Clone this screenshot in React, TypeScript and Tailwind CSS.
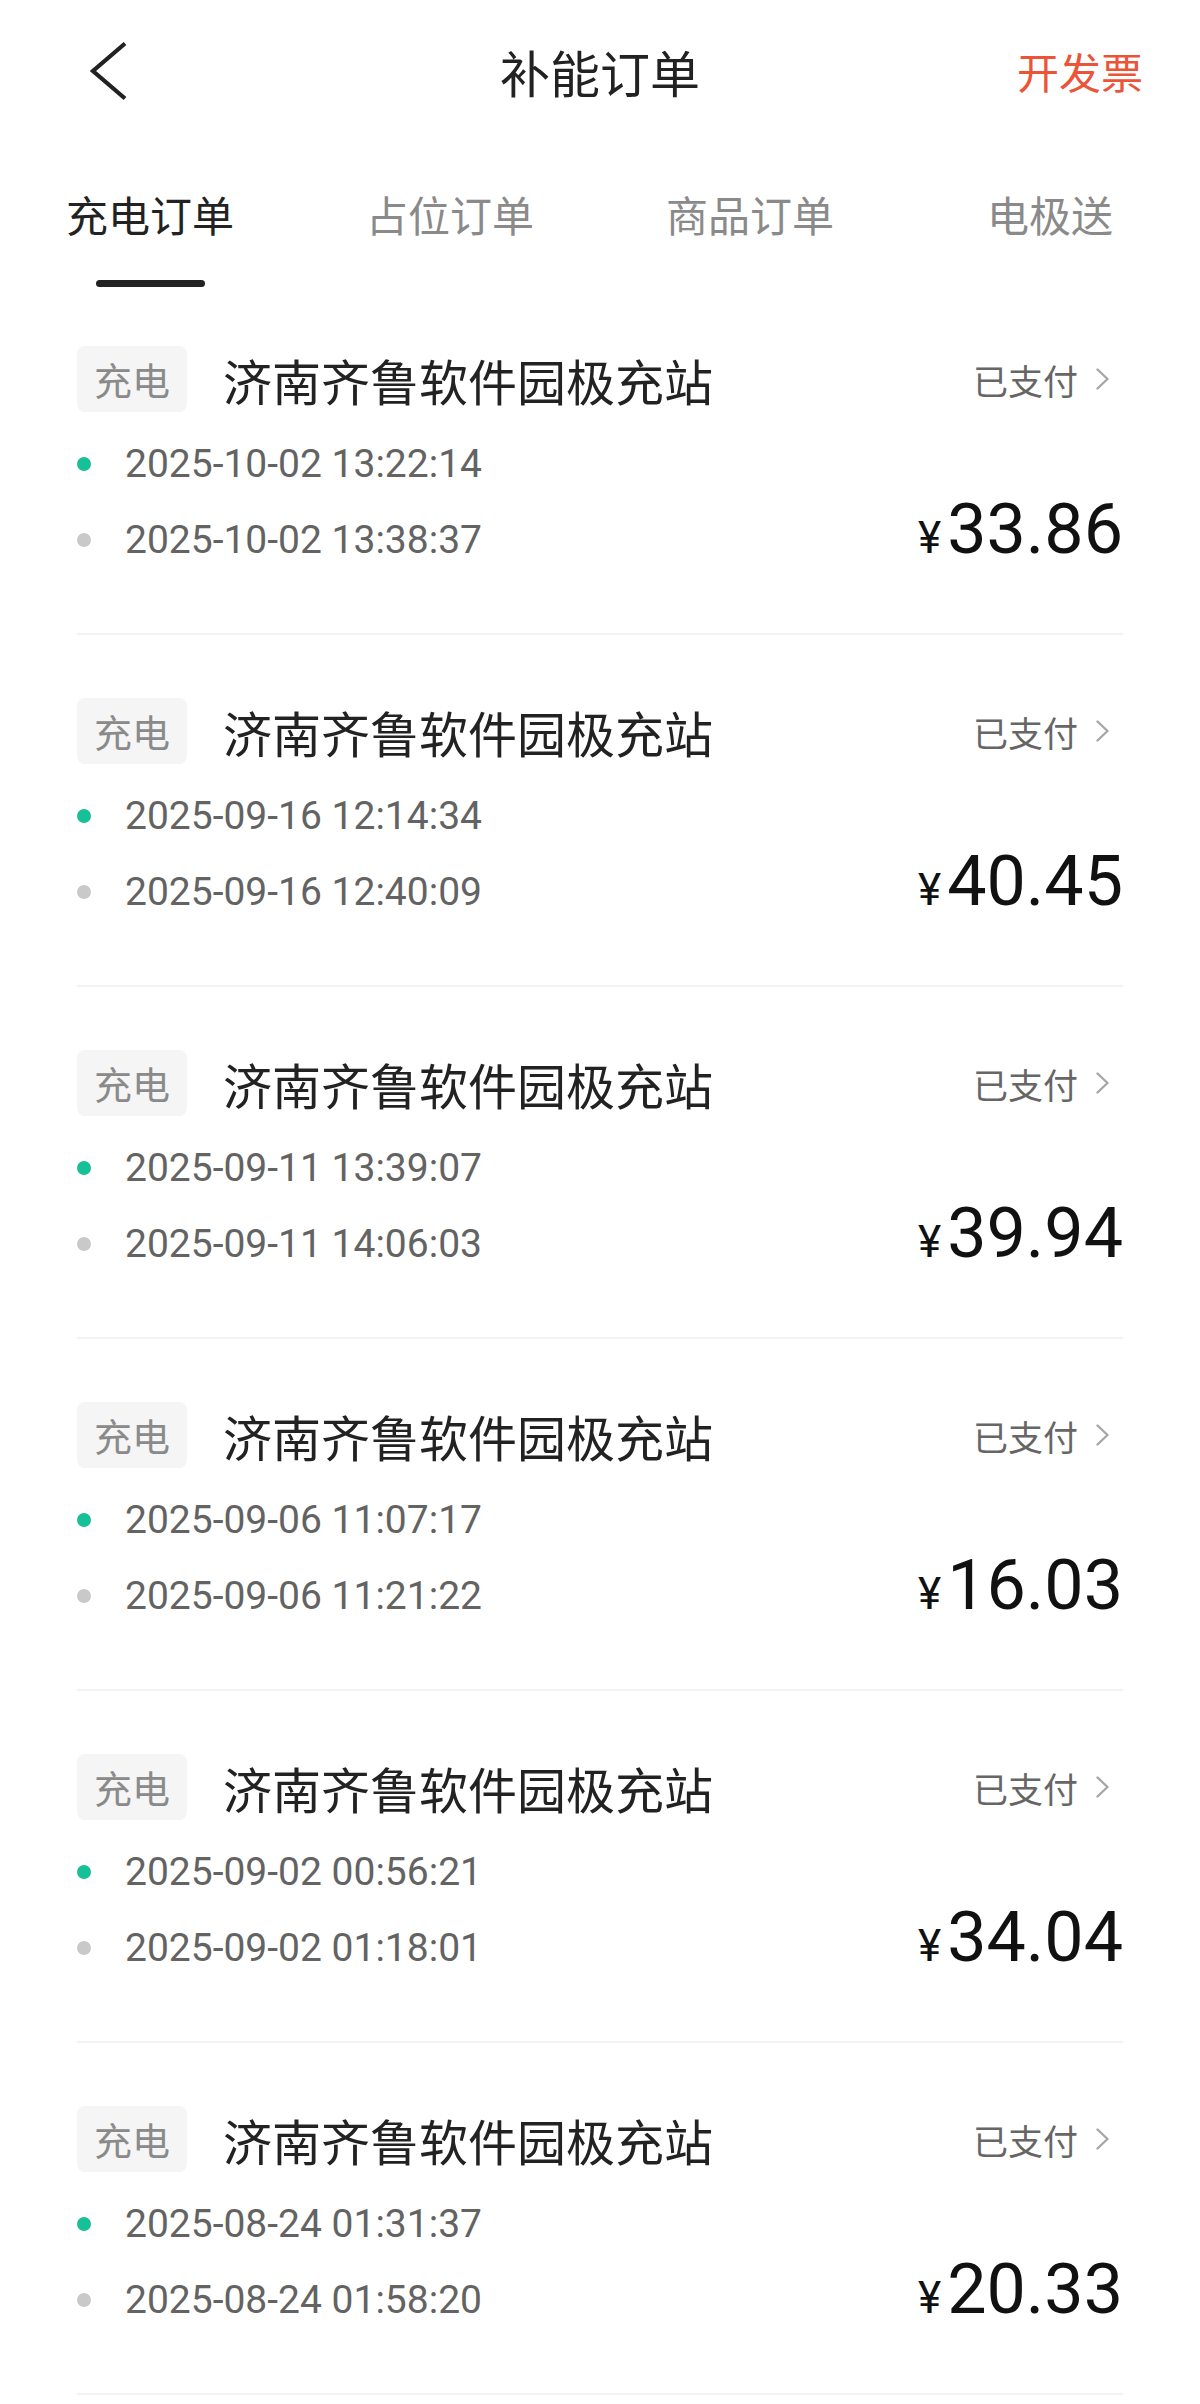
// 补能订单 — 充电订单列表
const ORDERS = [
  { start: '2025-10-02 13:22:14', end: '2025-10-02 13:38:37', amount: '33.86' },
  { start: '2025-09-16 12:14:34', end: '2025-09-16 12:40:09', amount: '40.45' },
  { start: '2025-09-11 13:39:07', end: '2025-09-11 14:06:03', amount: '39.94' },
  { start: '2025-09-06 11:07:17', end: '2025-09-06 11:21:22', amount: '16.03' },
  { start: '2025-09-02 00:56:21', end: '2025-09-02 01:18:01', amount: '34.04' },
  { start: '2025-08-24 01:31:37', end: '2025-08-24 01:58:20', amount: '20.33' },
];

const TABS = ['充电订单', '占位订单', '商品订单', '电极送'];

const CJK = "font-['Noto_Sans_CJK_SC','Noto_Sans',sans-serif]";
const NUM = "font-['Roboto','Noto_Sans_CJK_SC',sans-serif]";

function OrderItem({ o }: { o: (typeof ORDERS)[number] }) {
  return (
    <div className="pt-[63px] first:pt-[59px] pb-[55px] border-b-2 border-[#f3f3f3]">
      <div className="flex items-center h-[66px]">
        <div
          className={`w-[110px] h-[66px] rounded-[8px] bg-[#f5f5f5] flex items-center justify-center text-[38px] leading-none text-[#8a8a8a] ${CJK}`}
        >
          充电
        </div>
        <div className={`ml-[36px] text-[49px] leading-none text-[#222] ${CJK}`}>
          济南齐鲁软件园极充站
        </div>
        <div className="ml-auto mr-[14px] flex items-center gap-[18px]">
          <span className={`text-[35px] leading-none text-[#666] ${CJK}`}>已支付</span>
          <svg width="13" height="22" viewBox="0 0 13 22" fill="none">
            <polyline
              points="1.5,1.5 11.5,11 1.5,20.5"
              stroke="#a6a6a6"
              strokeWidth="2.4"
              strokeLinecap="round"
              strokeLinejoin="round"
            />
          </svg>
        </div>
      </div>

      <div className={`mt-[14px] text-[39px] leading-[76px] text-[#636363] ${NUM}`}>
        <span className="inline-block w-[14px] h-[14px] rounded-full bg-[#19bf96] mr-[34px] align-[6px]" />
        {o.start}
      </div>

      <div className="flex items-baseline justify-between">
        <div className={`text-[39px] leading-[76px] text-[#636363] ${NUM}`}>
          <span className="inline-block w-[14px] h-[14px] rounded-full bg-[#c9c9c9] mr-[34px] align-[6px]" />
          {o.end}
        </div>
        <div className={`flex items-baseline text-[#111] ${NUM}`}>
          <span className="text-[44px] leading-none mr-[6px]">¥</span>
          <span className="text-[70px] leading-[54px]">{o.amount}</span>
        </div>
      </div>
    </div>
  );
}

export default function App() {
  return (
    <main className="min-h-screen bg-white w-[1200px]">
      <header className="h-[146px] pb-[4px] grid grid-cols-[1fr_auto_1fr] items-center">
        <div className="pl-[90px]">
          <svg width="38" height="60" viewBox="0 0 38 60" fill="none">
            <polyline
              points="35,2.5 3,30 35,57.5"
              stroke="#222"
              strokeWidth="4.2"
              strokeLinejoin="miter"
            />
          </svg>
        </div>
        <h1 className={`text-[50px] leading-none font-normal text-[#222] ${CJK}`}>补能订单</h1>
        <div className="flex justify-end pr-[57px]">
          <span className={`text-[42px] leading-none text-[#ea5538] ${CJK}`}>开发票</span>
        </div>
      </header>

      <nav className="grid grid-cols-4 pt-[47px]">
        {TABS.map((t, i) => (
          <div key={t} className="flex flex-col items-center">
            <span
              className={`text-[42px] leading-none ${CJK} ${i === 0 ? 'text-[#222]' : 'text-[#8a8a8a]'}`}
            >
              {t}
            </span>
            <div
              className={`mt-[45px] h-[7px] w-[109px] rounded-full ${i === 0 ? 'bg-[#222]' : 'bg-transparent'}`}
            />
          </div>
        ))}
      </nav>

      <div className="px-[77px]">
        {ORDERS.map((o) => (
          <OrderItem key={o.start} o={o} />
        ))}
      </div>
    </main>
  );
}
